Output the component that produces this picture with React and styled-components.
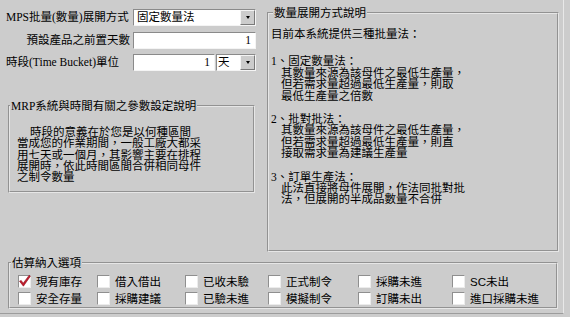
import styled, { createGlobalStyle } from 'styled-components';

const serif = `"Liberation Serif", "Noto Sans CJK TC", serif`;
const sans = `"Liberation Sans", "Noto Sans CJK TC", sans-serif`;

const GlobalStyle = createGlobalStyle`
  html, body {
    margin: 0;
    padding: 0;
    background: #cccccc;
  }
  body {
    font-family: ${serif};
    color: #000;
  }
`;

const Window = styled.div`
  width: 563px;
  height: 313px;
  background: #cccccc;
  border-right: 1px solid #e8e8e8;
  border-bottom: 1px solid #9c9c9c;
  display: flex;
  flex-direction: column;
  font-size: 11.5px;
  overflow: hidden;
`;

const TopArea = styled.div`
  display: flex;
  height: 257px;
`;

const LeftCol = styled.div`
  width: 262px;
  box-sizing: border-box;
  padding: 9px 0 0 6px;
  display: flex;
  flex-direction: column;
`;

const Form = styled.div`
  display: flex;
  flex-direction: column;
  gap: 5.5px;
`;

const Row = styled.div`
  display: flex;
  align-items: center;
  height: 17px;
`;

const Label = styled.label`
  width: 127px;
  box-sizing: border-box;
  padding-right: ${(p) => (p.$right ? '3px' : '0')};
  text-align: ${(p) => (p.$right ? 'right' : 'left')};
  white-space: nowrap;
  line-height: 17px;
`;

const Field = styled.div`
  display: flex;
  width: ${(p) => p.$w}px;
  height: 17px;
  margin-left: ${(p) => p.$gap || 0}px;
  box-sizing: border-box;
  background: #fff;
  border: 1px solid;
  border-color: #8a8a8a #f4f4f4 #f4f4f4 #8a8a8a;
`;

const FieldText = styled.span`
  flex: 1;
  padding: 0 4px 0 ${(p) => p.$pl || 3}px;
  line-height: 15px;
  text-align: ${(p) => p.$align || 'left'};
  white-space: nowrap;
`;

const DropButton = styled.span`
  width: 15px;
  box-sizing: border-box;
  background: #cccccc;
  border: 1px solid;
  border-color: #f4f4f4 #7a7a7a #7a7a7a #f4f4f4;
  display: flex;
  align-items: center;
  justify-content: center;

  &::after {
    content: '';
    border-left: 2.5px solid transparent;
    border-right: 2.5px solid transparent;
    border-top: 3px solid #000;
  }
`;

const GroupBox = styled.fieldset`
  margin: ${(p) => p.$m || '0'};
  padding: 0;
  min-width: 0;
  width: ${(p) => p.$w}px;
  height: ${(p) => (p.$h ? `${p.$h}px` : 'auto')};
  box-sizing: border-box;
  border: 2px groove #e6e6e6;
`;

const Legend = styled.legend`
  margin-left: ${(p) => p.$indent || 0}px;
  padding: 0 1px;
  line-height: 12px;
  font-family: ${(p) => (p.$sans ? sans : serif)};
  white-space: nowrap;
`;

const Note = styled.div`
  padding: 15px 0 8px 7px;
  line-height: 11.3px;
  white-space: nowrap;
`;

const NoteLine = styled.div`
  text-indent: ${(p) => p.$indent || 0}px;
`;

const RightCol = styled.div`
  margin-left: 5px;
  padding-top: 7px;
`;

const Explain = styled.div`
  padding: 10px 0 0 2px;
  line-height: 11.4px;
  white-space: nowrap;
`;

const Para = styled.div`
  margin-top: ${(p) => p.$mt || 0}px;
`;

const SubLine = styled.div`
  padding-left: 10px;
`;

const OptionGrid = styled.div`
  display: grid;
  grid-template-columns: 79px 88px 83px 90px 94px 1fr;
  grid-auto-rows: 17px;
  padding: 3.5px 0 0 8px;
  font-family: ${sans};
`;

const Option = styled.label`
  display: flex;
  align-items: center;
  gap: 5px;
  white-space: nowrap;
`;

const Box = styled.span`
  width: 13px;
  height: 13px;
  box-sizing: border-box;
  background: #fff;
  border: 1px solid;
  border-color: #8f8f8f #ececec #ececec #8f8f8f;
  display: flex;
  align-items: center;
  justify-content: center;
  flex-shrink: 0;

  svg {
    overflow: visible;
  }
`;

const Check = () => (
  <svg width="11" height="11" viewBox="0 0 11 11">
    <path
      d="M0.5 5.2 L2.2 4.4 L4.2 7.2 L10.2 -0.8 L11.4 0.2 L4.4 10.2 Z"
      fill="#c21c2c"
      stroke="#8e1020"
      strokeWidth="0.6"
      strokeLinejoin="round"
    />
  </svg>
);

const mrpLines = [
  '時段的意義在於您是以何種區間',
  '當成您的作業期間，一般工廠大都采',
  '用七天或一個月，其影響主要在排程',
  '展開時，依此時間區間合併相同母件',
  '之制令數量',
];

const methods = [
  {
    title: '1、固定數量法：',
    lines: ['其數量來源為該母件之最低生產量，', '但若需求量超過最低生產量，則取', '最低生產量之倍數'],
  },
  {
    title: '2、批對批法：',
    lines: ['其數量來源為該母件之最低生產量，', '但若需求量超過最低生產量，則直', '接取需求量為建議生產量'],
  },
  {
    title: '3、訂單生產法：',
    lines: ['此法直接將母件展開，作法同批對批', '法，但展開的半成品數量不合併'],
  },
];

const options = [
  { label: '現有庫存', checked: true },
  { label: '借入借出' },
  { label: '已收未驗' },
  { label: '正式制令' },
  { label: '採購未進' },
  { label: 'SC未出' },
  { label: '安全存量' },
  { label: '採購建議' },
  { label: '已驗未進' },
  { label: '模擬制令' },
  { label: '訂購未出' },
  { label: '進口採購未進' },
];

export default function App() {
  return (
    <>
      <GlobalStyle />
      <Window>
        <TopArea>
          <LeftCol>
            <Form>
              <Row>
                <Label>MPS批量(數量)展開方式</Label>
                <Field $w={123}>
                  <FieldText>固定數量法</FieldText>
                  <DropButton />
                </Field>
              </Row>
              <Row>
                <Label $right>預設產品之前置天數</Label>
                <Field $w={123}>
                  <FieldText $align="right">1</FieldText>
                </Field>
              </Row>
              <Row>
                <Label>時段(Time Bucket)單位</Label>
                <Field $w={82}>
                  <FieldText $align="right">1</FieldText>
                </Field>
                <Field $w={40} $gap={1}>
                  <FieldText $pl={1}>天</FieldText>
                  <DropButton />
                </Field>
              </Row>
            </Form>
            <GroupBox $w={247} $m="29px 0 0 2px">
              <Legend>MRP系統與時間有關之參數設定說明</Legend>
              <Note>
                {mrpLines.map((line, i) => (
                  <NoteLine key={i} $indent={i === 0 ? 13 : 0}>
                    {line}
                  </NoteLine>
                ))}
              </Note>
            </GroupBox>
          </LeftCol>
          <RightCol>
            <GroupBox $w={292} $h={245}>
              <Legend $sans $indent={4}>數量展開方式說明</Legend>
              <Explain>
                <div>目前本系統提供三種批量法：</div>
                {methods.map((m, i) => (
                  <Para key={m.title} $mt={i === 0 ? 16 : 12}>
                    <div>{m.title}</div>
                    {m.lines.map((l) => (
                      <SubLine key={l}>{l}</SubLine>
                    ))}
                  </Para>
                ))}
              </Explain>
            </GroupBox>
          </RightCol>
        </TopArea>
        <GroupBox $w={550} $m="0 0 0 8px">
          <Legend $sans $indent={1}>估算納入選項</Legend>
          <OptionGrid>
            {options.map((o) => (
              <Option key={o.label}>
                <Box>{o.checked && <Check />}</Box>
                {o.label}
              </Option>
            ))}
          </OptionGrid>
        </GroupBox>
      </Window>
    </>
  );
}
